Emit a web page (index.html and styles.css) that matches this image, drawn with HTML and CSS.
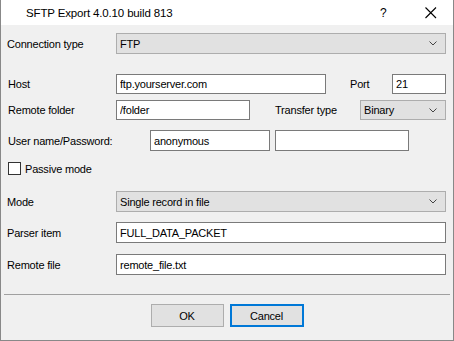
FILE: index.html
```html
<!DOCTYPE html>
<html>
<head>
<meta charset="utf-8">
<link rel="stylesheet" href="styles.css">
</head>
<body>
<div class="window">
  <div class="titlebar">
    <span class="title">SFTP Export 4.0.10 build 813</span>
    <span class="help">?</span>
    <svg class="close" width="12" height="12" viewBox="0 0 12 12"><path d="M0.5 0.5L11 11M11 0.5L0.5 11" stroke="#000" stroke-width="1.1" fill="none"/></svg>
  </div>
  <div class="content">
    <div class="row r-conn">
      <span class="label">Connection type</span>
      <div class="combo w-full"><span>FTP</span><svg class="chev" width="8" height="5" viewBox="0 0 8 5"><path d="M0.5 0.5L4 4L7.5 0.5" stroke="#444" fill="none"/></svg></div>
    </div>
    <div class="row r-host">
      <span class="label l2">Host</span>
      <input class="field w-host" value="ftp.yourserver.com">
      <span class="port-label">Port</span>
      <input class="field w-port" value="21">
    </div>
    <div class="row r-folder">
      <span class="label l2">Remote folder</span>
      <input class="field w-folder" value="/folder">
      <span class="tt-label">Transfer type</span>
      <div class="combo w-binary"><span>Binary</span><svg class="chev" width="8" height="5" viewBox="0 0 8 5"><path d="M0.5 0.5L4 4L7.5 0.5" stroke="#444" fill="none"/></svg></div>
    </div>
    <div class="row r-user">
      <span class="label l2 l-user">User name/Password:</span>
      <input class="field w-user" value="anonymous">
      <input class="field w-pass" value="">
    </div>
    <div class="row r-passive">
      <span class="checkbox"></span>
      <span class="cb-label">Passive mode</span>
    </div>
    <div class="row r-mode">
      <span class="label">Mode</span>
      <div class="combo w-full"><span>Single record in file</span><svg class="chev" width="8" height="5" viewBox="0 0 8 5"><path d="M0.5 0.5L4 4L7.5 0.5" stroke="#444" fill="none"/></svg></div>
    </div>
    <div class="row r-parser">
      <span class="label">Parser item</span>
      <input class="field w-full" value="FULL_DATA_PACKET">
    </div>
    <div class="row r-file">
      <span class="label">Remote file</span>
      <input class="field w-full" value="remote_file.txt">
    </div>
    <div class="separator"></div>
    <div class="buttons">
      <button class="btn">OK</button>
      <button class="btn btn-default">Cancel</button>
    </div>
  </div>
</div>
</body>
</html>
```
FILE: styles.css
```css
html, body {
  margin: 0;
  padding: 0;
  background: #f0f0f0;
}
.window {
  width: 454px;
  height: 341px;
  box-sizing: border-box;
  border: 1px solid #888;
  border-top: none;
  background: #f0f0f0;
  font-family: "Liberation Sans", Arial, sans-serif;
  font-size: 11px;
  letter-spacing: -0.2px;
  color: #000;
  display: flex;
  flex-direction: column;
}
.titlebar {
  height: 25px;
  background: #fff;
  display: flex;
  align-items: center;
  position: relative;
}
.title {
  font-size: 11.5px;
  letter-spacing: -0.15px;
  padding-left: 25px;
  flex: 1;
}
.help {
  font-size: 12px;
  width: 12px;
  margin-right: 33px;
}
.close {
  margin-right: 16px;
}
.content {
  display: flex;
  flex-direction: column;
}
.row {
  display: flex;
  align-items: center;
}
.label {
  width: 109px;
  padding-left: 6px;
  flex: none;
}
.l2 {
  padding-left: 7px;
  width: 108px;
}
.l-user {
  width: 142px;
}
.r-conn { margin-top: 8px; height: 21px; }
.r-host { margin-top: 20px; height: 20px; }
.r-folder { margin-top: 6px; height: 20px; }
.r-user { margin-top: 10px; height: 21px; }
.r-passive { margin-top: 11px; height: 13px; }
.r-mode { margin-top: 16px; height: 21px; }
.r-parser { margin-top: 10px; height: 21px; }
.r-file { margin-top: 11px; height: 21px; }

.field {
  box-sizing: border-box;
  height: 100%;
  border: 1px solid #7a7a7a;
  background: #fff;
  padding: 0 3px;
  margin: 0;
  font-family: inherit;
  font-size: 11px;
  letter-spacing: -0.2px;
  color: #000;
  outline: none;
  flex: none;
}
.combo {
  box-sizing: border-box;
  height: 100%;
  border: 1px solid #adadad;
  background: #e1e1e1;
  padding: 0 3px;
  display: flex;
  align-items: center;
  justify-content: space-between;
  flex: none;
}
.chev {
  margin-right: 5px;
}
.w-full { width: 330px; }
.w-host { width: 210px; }
.port-label { margin-left: 24px; width: 42px; }
.w-port { width: 54px; }
.w-folder { width: 134px; }
.tt-label { margin-left: 25px; width: 85px; }
.w-binary { width: 86px; }
.w-user { width: 120px; }
.w-pass { width: 134px; margin-left: 5px; }

.checkbox {
  width: 13px;
  height: 13px;
  box-sizing: border-box;
  border: 1px solid #333;
  background: #fff;
  margin-left: 7px;
}
.cb-label {
  margin-left: 4px;
}
.separator {
  margin: 19px 3px 0 3px;
  height: 1px;
  background: #a0a0a0;
}
.buttons {
  margin-top: 9px;
  display: flex;
  justify-content: center;
  gap: 6px;
}
.btn {
  width: 73px;
  height: 23px;
  box-sizing: border-box;
  border: 1px solid #adadad;
  background: #e1e1e1;
  font-family: inherit;
  font-size: 11px;
  letter-spacing: -0.2px;
  color: #000;
  padding: 0;
  margin: 0;
}
.btn-default {
  border: 2px solid #0078d7;
  width: 74px;
}
```
